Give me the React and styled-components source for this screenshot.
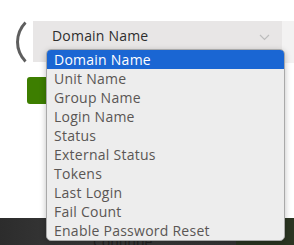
import React from 'react';
import styled, { createGlobalStyle } from 'styled-components';

const GlobalStyle = createGlobalStyle`
  html, body {
    margin: 0;
    padding: 0;
    background: #ffffff;
    font-family: "Open Sans", "Noto Sans", sans-serif;
  }
`;

const Page = styled.div`
  position: relative;
  width: 294px;
  height: 245px;
  overflow: hidden;
  display: flex;
  flex-direction: column;
`;

const TopRow = styled.div`
  display: flex;
  align-items: flex-start;
  padding-top: 21px;
  height: 41px;
`;

const Ring = styled.div`
  flex: none;
  width: 58px;
  height: 58px;
  margin: -8px -41px 0 16px;
  border-radius: 50%;
  border-left: 3px solid #5e5e5e;
  border-top: 3px solid transparent;
  border-bottom: 3px solid transparent;
  border-right: 3px solid transparent;
  box-sizing: border-box;
  filter: blur(0.4px);
`;

const Select = styled.div`
  position: relative;
  flex: none;
  width: 249px;
  height: 41px;
  background: #e8e6e6;
  display: flex;
  align-items: flex-start;
  justify-content: space-between;
  padding: 5px 12px 0 19px;
  box-sizing: border-box;
  font-size: 14px;
  letter-spacing: 0.2px;
  color: #2e2e2e;
`;

const SideStrip = styled.div`
  flex: 1;
  height: 42px;
  background: #f3f2f2;
`;

const Chevron = styled.svg`
  width: 11px;
  height: 7px;
  margin-top: 8px;
`;

const ButtonRow = styled.div`
  padding: 15px 0 0 27px;
`;

const GreenButton = styled.div`
  width: 40px;
  height: 27px;
  border-radius: 3px;
  background: #3d7e00;
`;

const Spacer = styled.div`
  flex: 1;
`;

const Footer = styled.div`
  height: 27px;
  display: flex;
  background: linear-gradient(90deg, #2c2c2c 0%, #363636 20%, #3a3a3a 35%, #353535 80%);
`;

const FooterLabel = styled.div`
  margin-left: 93px;
  padding-top: 17px;
  font-size: 14px;
  line-height: 14px;
  color: #1f1f1f;
`;

const FooterGreen = styled.div`
  margin-left: auto;
  width: 58px;
  background: #2b3522;
`;

const Menu = styled.ul`
  position: absolute;
  left: 46px;
  top: 49px;
  width: 237px;
  margin: 0;
  padding: 0;
  list-style: none;
  background: #ededed;
  border: 1px solid #a9a9a9;
  border-radius: 5px;
  overflow: hidden;
  box-shadow: 0 2px 6px rgba(0, 0, 0, 0.25);
`;

const Item = styled.li`
  height: 19px;
  line-height: 19px;
  padding-left: 7px;
  font-size: 14px;
  letter-spacing: 0.25px;
  white-space: nowrap;
  color: ${({ active }) => (active ? '#ffffff' : '#5a5654')};
  background: ${({ active }) => (active ? '#1a66d3' : 'transparent')};
`;

const options = [
  'Domain Name',
  'Unit Name',
  'Group Name',
  'Login Name',
  'Status',
  'External Status',
  'Tokens',
  'Last Login',
  'Fail Count',
  'Enable Password Reset',
];

export default function App() {
  return (
    <Page>
      <GlobalStyle />
      <TopRow>
        <Ring />
        <Select>
          <span>Domain Name</span>
          <Chevron viewBox="0 0 11 7">
            <path d="M1 1 L5.5 5.5 L10 1" fill="none" stroke="#bdbdbd" strokeWidth="1.2" />
          </Chevron>
        </Select>
        <SideStrip />
      </TopRow>
      <ButtonRow>
        <GreenButton />
      </ButtonRow>
      <Spacer />
      <Footer>
        <FooterLabel>Continue</FooterLabel>
        <FooterGreen />
      </Footer>
      <Menu>
        {options.map((o, i) => (
          <Item key={o} active={i === 0}>{o}</Item>
        ))}
      </Menu>
    </Page>
  );
}
